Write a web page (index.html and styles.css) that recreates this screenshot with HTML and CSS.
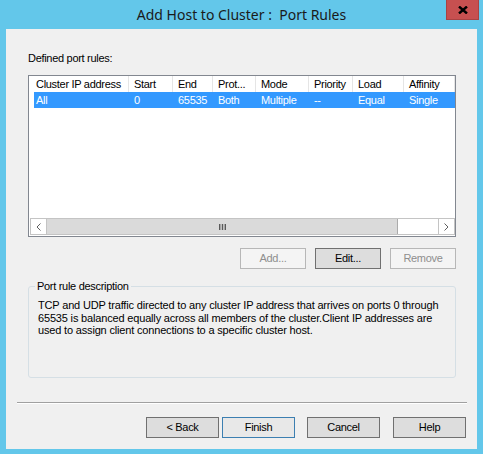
FILE: index.html
```html
<!DOCTYPE html>
<html lang="en">
<head>
<meta charset="utf-8">
<title>Add Host to Cluster : Port Rules</title>
<link rel="stylesheet" href="styles.css">
</head>
<body>
<div class="window">
  <div class="titlebar">
    <h1 class="title">Add Host to Cluster :  Port Rules</h1>
    <button class="close" type="button" aria-label="Close">
      <svg width="10" height="8" viewBox="0 0 10 8"><path d="M1 0.5 L9 7.5 M9 0.5 L1 7.5" stroke="#000" stroke-width="2.4" fill="none"/></svg>
    </button>
  </div>

  <div class="client">
    <div class="content">
      <div class="label">Defined port rules:</div>

      <div class="listbox">
        <div class="list-body">
          <div class="list-row list-header">
            <div class="cell first">Cluster IP address</div>
            <div class="cell">Start</div>
            <div class="cell">End</div>
            <div class="cell">Prot...</div>
            <div class="cell">Mode</div>
            <div class="cell">Priority</div>
            <div class="cell">Load</div>
            <div class="cell">Affinity</div>
          </div>
          <div class="list-row selected">
            <div class="cell first">All</div>
            <div class="cell">0</div>
            <div class="cell">65535</div>
            <div class="cell">Both</div>
            <div class="cell">Multiple</div>
            <div class="cell">--</div>
            <div class="cell">Equal</div>
            <div class="cell">Single</div>
          </div>
        </div>
        <div class="hscroll">
          <div class="arrow arrow-left">
            <svg width="5" height="8" viewBox="0 0 5 8"><polyline points="4.5,0.5 1,4 4.5,7.5" fill="none" stroke="#606060" stroke-width="1"/></svg>
          </div>
          <div class="thumb">
            <svg width="7" height="6" viewBox="0 0 7 6"><rect x="0" y="0" width="1.4" height="6" fill="#5a5a5a"/><rect x="2.8" y="0" width="1.4" height="6" fill="#5a5a5a"/><rect x="5.6" y="0" width="1.4" height="6" fill="#5a5a5a"/></svg>
          </div>
          <div class="track"></div>
          <div class="arrow arrow-right">
            <svg width="5" height="8" viewBox="0 0 5 8"><polyline points="0.5,0.5 4,4 0.5,7.5" fill="none" stroke="#606060" stroke-width="1"/></svg>
          </div>
        </div>
      </div>

      <div class="button-row">
        <button class="btn disabled" type="button" disabled>Add...</button>
        <button class="btn" type="button">Edit...</button>
        <button class="btn disabled" type="button" disabled>Remove</button>
      </div>

      <fieldset class="group">
        <legend>Port rule description</legend>
        <p class="description">TCP and UDP traffic directed to any cluster IP address that arrives on ports 0 through<br>65535 is balanced equally across all members of the cluster.Client IP addresses are<br>used to assign client connections to a specific cluster host.</p>
      </fieldset>
    </div>

    <div class="separator"></div>

    <div class="footer">
      <button class="btn wide back" type="button">&lt; Back</button>
      <button class="btn wide default finish" type="button">Finish</button>
      <button class="btn wide cancel" type="button">Cancel</button>
      <button class="btn wide" type="button">Help</button>
    </div>
  </div>
</div>
</body>
</html>
```

FILE: styles.css
```css
* {
  box-sizing: border-box;
}

html,
body {
  margin: 0;
  padding: 0;
}

body {
  width: 483px;
  height: 454px;
  overflow: hidden;
  background: #63c7ea;
  font-family: "Liberation Sans", Arial, sans-serif;
  font-size: 11px;
  letter-spacing: -0.3px;
  color: #000;
}

/* window frame */
.window {
  width: 483px;
  height: 454px;
  display: flex;
  flex-direction: column;
  background: #63c7ea;
}

.titlebar {
  height: 29px;
  display: grid;
  grid-template-columns: 1fr auto 1fr;
}

.title {
  grid-column: 2;
  margin: 0;
  font-family: "Noto Sans", sans-serif;
  font-weight: 400;
  font-size: 14px;
  line-height: 29px;
  letter-spacing: 0;
  white-space: pre;
  color: #1a1a1a;
}

.close {
  grid-column: 3;
  justify-self: end;
  align-self: start;
  width: 33px;
  height: 20px;
  margin: 0 4px 0 0;
  padding: 0;
  background: #c75050;
  border: 1px solid #a94343;
  border-top: none;
  display: flex;
  align-items: center;
  justify-content: center;
}

.client {
  height: 420px;
  margin: 0 6px;
  background: #f0f0f0;
  display: flex;
  flex-direction: column;
}

.content {
  padding: 23px 21px 0 22px;
}

.label {
  line-height: 13px;
}

/* list view */
.listbox {
  height: 162px;
  margin-top: 10px;
  border: 1px solid #828790;
  background: #fff;
  padding: 0 0 1px 1px;
  display: flex;
  flex-direction: column;
}

.list-body {
  flex: 1;
  padding-left: 4px;
}

.list-row {
  display: grid;
  grid-template-columns: 95px 44px 40px 43px 53px 44px 51px 51px;
  height: 16px;
  line-height: 16px;
}

.list-header .cell {
  border-right: 1px solid #e5e5e5;
}

.cell {
  padding-left: 5px;
  white-space: nowrap;
  overflow: hidden;
}

.cell.first {
  padding-left: 2px;
}

.selected {
  background: #3399ff;
  color: #fff;
}

.hscroll {
  height: 17px;
  display: flex;
  border: 1px solid #c4c4c4;
  background: #fff;
}

.arrow {
  width: 16px;
  display: flex;
  align-items: center;
  justify-content: center;
  background: #fff;
}

.arrow-left {
  border-right: 1px solid #c4c4c4;
}

.arrow-right {
  border-left: 1px solid #c4c4c4;
}

.thumb {
  width: 351px;
  background: #dadada;
  border-right: 1px solid #ababab;
  display: flex;
  align-items: center;
  justify-content: center;
}

.track {
  flex: 1;
  background: #fff;
}

/* push buttons */
.btn {
  height: 21px;
  width: 66px;
  padding: 0;
  margin: 0;
  font-family: "Liberation Sans", Arial, sans-serif;
  font-size: 11px;
  letter-spacing: -0.3px;
  line-height: 19px;
  color: #000;
  background: #dddddd;
  border: 1px solid #707070;
  border-radius: 0;
  text-align: center;
}

.btn.disabled {
  background: #f4f4f4;
  border-color: #b7b7b7;
  color: #8e8e8e;
}

.btn.wide {
  width: 73px;
}

.btn.default {
  background: #e8e8e8;
  border-color: #3c7fb1;
}

.button-row {
  margin-top: 11px;
  display: flex;
  justify-content: flex-end;
  gap: 9px;
}

/* group box */
.group {
  margin: 11px 0 0;
  padding: 6px 9px 0 9px;
  height: 98px;
  border: 1px solid #d5dfe5;
  border-radius: 3px;
  min-width: 0;
}

.group legend {
  padding: 0 2px;
  margin-left: -3px;
  line-height: 13px;
}

.description {
  margin: 0;
  line-height: 12.5px;
  letter-spacing: -0.17px;
  white-space: nowrap;
}

.separator {
  height: 2px;
  margin: 24px 10px 0 11px;
  border-top: 1px solid #a0a0a0;
  border-bottom: 1px solid #ffffff;
}

.footer {
  margin-top: 13px;
  padding-right: 11px;
  display: flex;
  justify-content: flex-end;
}

.back {
  margin-right: 3px;
}

.finish {
  margin-right: 12px;
}

.cancel {
  margin-right: 13px;
}
```
